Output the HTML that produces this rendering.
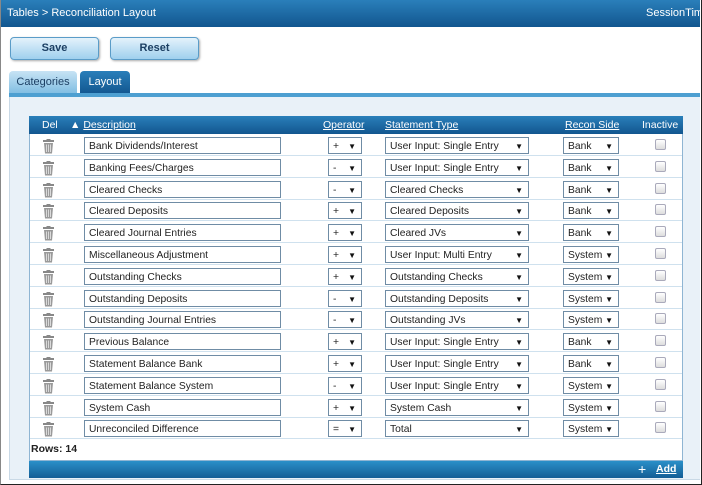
<!DOCTYPE html><html><head><style>
*{box-sizing:border-box;margin:0;padding:0}
body{width:702px;height:485px;overflow:hidden;background:#fff;font-family:"Liberation Sans",Arial,sans-serif;font-size:11px;color:#222;position:relative}
.frame{position:absolute;left:0;top:0;width:702px;height:485px;border:1px solid #222;border-left-color:#888;border-top:none}
.hdr{position:absolute;left:0;top:0;width:700px;height:27px;background:linear-gradient(#2a7fba,#12568f);color:#fff;font-size:11px;line-height:27px;padding-left:7px}
.hdr span{position:absolute;left:646px;top:0;white-space:nowrap}
.btn{position:absolute;top:37px;height:23px;width:89px;border:1px solid #5a9cc8;border-radius:4px;background:linear-gradient(#e4f2fb,#9fd0ee);font-weight:bold;color:#1c3f63;text-align:center;line-height:21px;font-size:11px;box-shadow:1px 1px 2px #aaa}
.tab{position:absolute;top:71px;height:23px;border-radius:4px 4px 0 0;text-align:center;line-height:22px;font-size:11px}
.line{position:absolute;left:9px;top:93px;width:691px;height:4px;background:#4d9fd1}
.panel{position:absolute;left:9px;top:97px;width:691px;height:383px;background:#e9f1f8;border-left:1px solid #c9d9e6;border-bottom:1px solid #c9d9e6}
.tbl{position:absolute;left:29px;top:116px;width:654px;height:345px;background:#fff;border:1px solid #8fb5d3}
.th{position:absolute;left:29px;top:116px;width:654px;height:18px;background:linear-gradient(#2a7fba,#12568f);color:#fff;font-size:10.5px}
.th div{position:absolute;top:3px;white-space:nowrap}
.th u{text-decoration:underline}
.row{position:absolute;left:30px;width:652px;height:22px;border-bottom:1px solid #cfe1ee}
.row>*{position:absolute;top:3px;height:17px}
.inp{left:54px;width:197px;border:1px solid #6f8ca5;padding-left:4px;line-height:17px;font-size:10.3px;background:#fff;white-space:nowrap}
.sel{border:1px solid #6f8ca5;padding-left:4px;line-height:17px;font-size:10.3px;background:#fff;white-space:nowrap}
.sel b{position:absolute;right:5px;top:0;font-size:8px;font-weight:normal;color:#111}
.op{left:298px;width:34px}.st{left:355px;width:144px}.rs{left:533px;width:56px}
.cb{left:625px;top:5px!important;width:11px;height:11px!important;border:1px solid #aab;border-radius:2px;background:linear-gradient(#fff,#ddd)}
.tr{left:12px;top:4px!important}
.rows{position:absolute;left:31px;top:443px;font-weight:bold;font-size:10.5px}
.foot{position:absolute;left:29px;top:461px;width:654px;height:17px;background:linear-gradient(#2a8fc8,#145e96);color:#fff;font-size:10.5px}
</style></head><body>
<div class="hdr">Tables &gt; Reconciliation Layout<span>SessionTime</span></div>
<div class="btn" style="left:10px">Save</div>
<div class="btn" style="left:110px">Reset</div>
<div class="tab" style="left:9px;width:68px;background:linear-gradient(#c7e3f4,#7fbde2);color:#1c3f63">Categories</div>
<div class="tab" style="left:80px;width:50px;background:linear-gradient(#2a7fba,#12568f);color:#fff">Layout</div>
<div class="line"></div>
<div class="panel"></div>
<div class="tbl"></div>
<div class="th">
<div style="left:13px">Del</div>
<div style="left:41px">&#9650; <u>Description</u></div>
<div style="left:294px"><u>Operator</u></div>
<div style="left:356px"><u>Statement Type</u></div>
<div style="left:536px"><u>Recon Side</u></div>
<div style="left:613px">Inactive</div>
</div>
<div id="rows"></div>
<script>
var d=[["Bank Dividends/Interest","+","User Input: Single Entry","Bank"],["Banking Fees/Charges","-","User Input: Single Entry","Bank"],["Cleared Checks","-","Cleared Checks","Bank"],["Cleared Deposits","+","Cleared Deposits","Bank"],["Cleared Journal Entries","+","Cleared JVs","Bank"],["Miscellaneous Adjustment","+","User Input: Multi Entry","System"],["Outstanding Checks","+","Outstanding Checks","System"],["Outstanding Deposits","-","Outstanding Deposits","System"],["Outstanding Journal Entries","-","Outstanding JVs","System"],["Previous Balance","+","User Input: Single Entry","Bank"],["Statement Balance Bank","+","User Input: Single Entry","Bank"],["Statement Balance System","-","User Input: Single Entry","System"],["System Cash","+","System Cash","System"],["Unreconciled Difference","=","Total","System"]];
var h="",tr='<svg class="tr" width="13" height="15" viewBox="0 0 13 15"><rect x="1" y="1" width="11" height="2" fill="#888"/><rect x="4.5" y="0" width="4" height="1.5" fill="#888"/><path d="M2 4h9l-1 10.5H3z" fill="#9a9a9a"/><path d="M4.5 5.5v7.5M6.5 5.5v7.5M8.5 5.5v7.5" stroke="#e0e0e0" stroke-width="0.9"/></svg>';
d.forEach(function(r,i){var t=(134+i*21.8).toFixed(1);
h+='<div class="row" style="top:'+t+'px">'+tr+'<div class="inp">'+r[0]+'</div><div class="sel op">'+r[1]+'<b>&#9660;</b></div><div class="sel st">'+r[2]+'<b>&#9660;</b></div><div class="sel rs">'+r[3]+'<b>&#9660;</b></div><div class="cb"></div></div>';});
document.getElementById("rows").innerHTML=h;
</script>
<div class="rows">Rows: 14</div>
<div class="foot"><span style="position:absolute;left:609px;top:0;font-size:14px;line-height:16px">+</span><u style="position:absolute;left:627px;top:2px;font-weight:bold">Add</u></div>
<div class="frame"></div>
</body></html>
